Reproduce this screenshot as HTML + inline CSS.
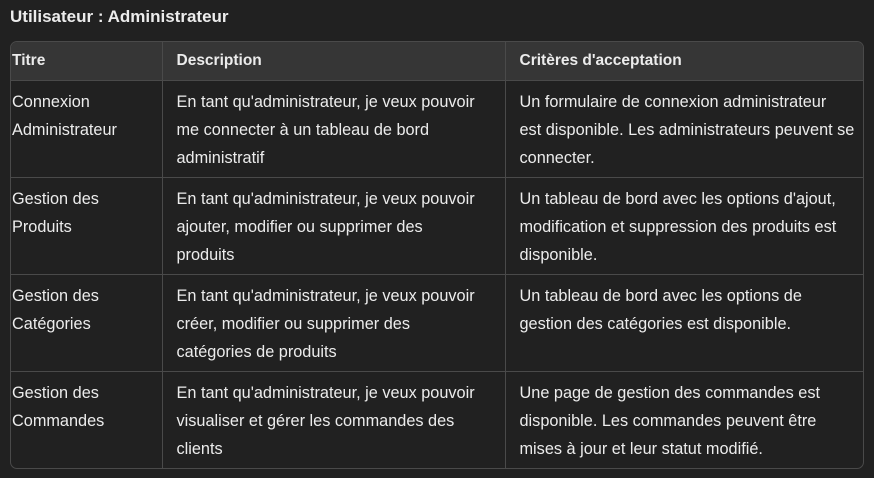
<!DOCTYPE html>
<html><head><meta charset="utf-8"><style>
body{margin:0;background:#212121;width:874px;height:478px;overflow:hidden;font-family:"Liberation Sans",sans-serif;color:#ececec;}
h3{position:absolute;left:10px;top:6px;margin:0;font-size:17px;font-weight:bold;line-height:22px;}
.wrap{position:absolute;left:10px;top:41px;width:852px;height:426px;border:1px solid #4a4a4a;border-radius:7px;overflow:hidden;}
table{border-collapse:collapse;width:852px;font-size:16.3px;table-layout:fixed;}
th{background:#363636;text-align:left;font-weight:bold;height:38px;padding:0 14px;line-height:20px;font-size:15.5px;}
td{vertical-align:top;padding:7px 14px 5px;line-height:28px;white-space:nowrap;overflow:hidden;}
tr.r{height:97px;}
th,td{border-left:1px solid #4a4a4a;border-bottom:1px solid #4a4a4a;}
th:first-child,td:first-child{border-left:none;padding-left:1px;}
tr:last-child td{border-bottom:none;}
</style></head><body>
<h3>Utilisateur : Administrateur</h3>
<div class="wrap"><table>
<colgroup><col style="width:151px"><col style="width:343px"><col></colgroup>
<tr><th>Titre</th><th>Description</th><th>Critères d'acceptation</th></tr>
<tr class="r"><td>Connexion<br>Administrateur</td><td>En tant qu'administrateur, je veux pouvoir<br>me connecter à un tableau de bord<br>administratif</td><td>Un formulaire de connexion administrateur<br>est disponible. Les administrateurs peuvent se<br>connecter.</td></tr>
<tr class="r"><td>Gestion des<br>Produits</td><td>En tant qu'administrateur, je veux pouvoir<br>ajouter, modifier ou supprimer des<br>produits</td><td>Un tableau de bord avec les options d'ajout,<br>modification et suppression des produits est<br>disponible.</td></tr>
<tr class="r"><td>Gestion des<br>Catégories</td><td>En tant qu'administrateur, je veux pouvoir<br>créer, modifier ou supprimer des<br>catégories de produits</td><td>Un tableau de bord avec les options de<br>gestion des catégories est disponible.</td></tr>
<tr class="r"><td>Gestion des<br>Commandes</td><td>En tant qu'administrateur, je veux pouvoir<br>visualiser et gérer les commandes des<br>clients</td><td>Une page de gestion des commandes est<br>disponible. Les commandes peuvent être<br>mises à jour et leur statut modifié.</td></tr>
</table></div>
</body></html>
